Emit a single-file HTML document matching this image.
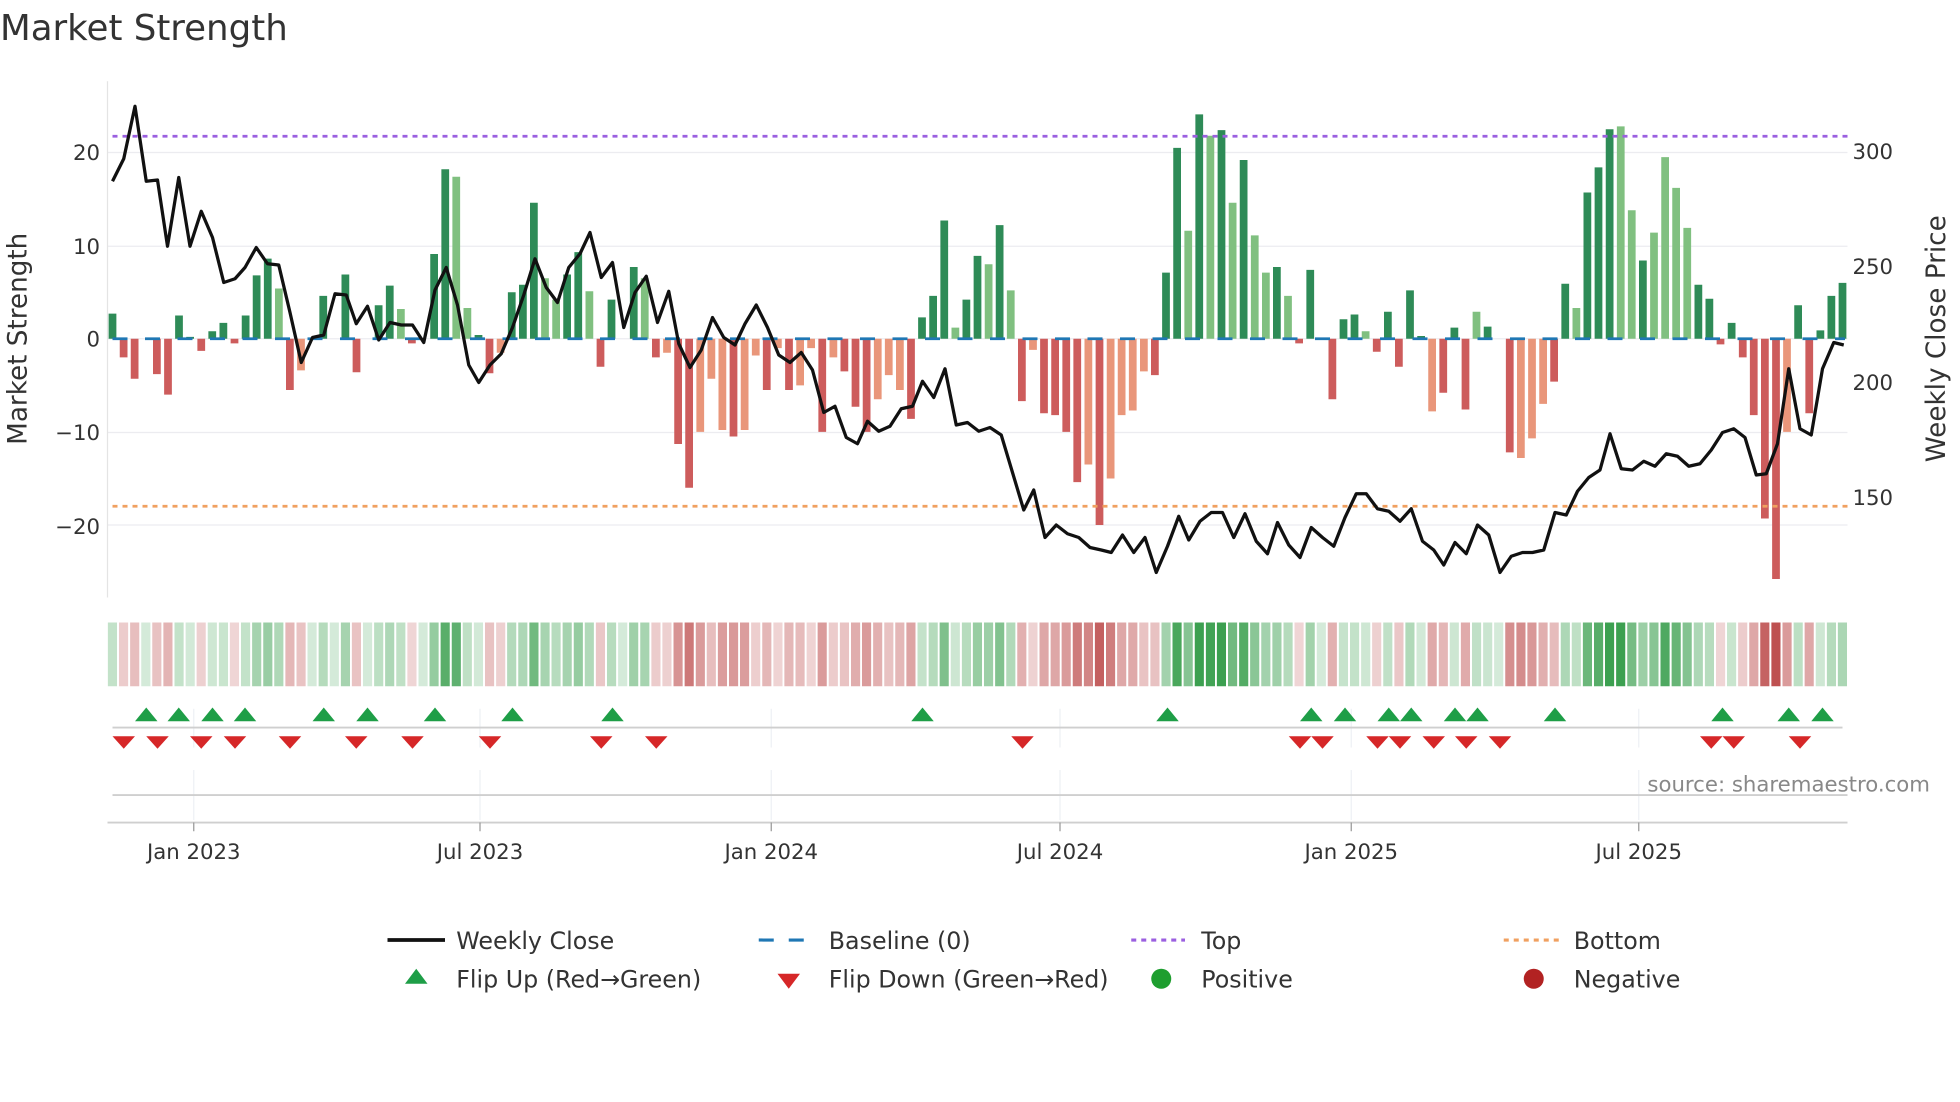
<!DOCTYPE html>
<html><head><meta charset="utf-8"><style>
html,body{margin:0;padding:0;background:#fff;width:1960px;height:1102px;overflow:hidden}
svg{display:block;font-family:"DejaVu Sans","Liberation Sans",sans-serif}
</style></head><body>
<svg id="s" width="1960" height="1102" viewBox="0 0 1568 881.6" preserveAspectRatio="none" xmlns="http://www.w3.org/2000/svg">
<rect width="1568" height="882" fill="#fff"/>
<text x="0" y="32" font-size="28.5" fill="#333">Market Strength</text>
<g id="grid" stroke="#ececf0" stroke-width="1">
<line x1="86" y1="122" x2="1478" y2="122"/><line x1="86" y1="197" x2="1478" y2="197"/>
<line x1="86" y1="271" x2="1478" y2="271"/><line x1="86" y1="346" x2="1478" y2="346"/>
<line x1="86" y1="420" x2="1478" y2="420"/>
</g>
<line x1="86" y1="65" x2="86" y2="478" stroke="#e4e4e4"/>
<g font-size="17" fill="#333" text-anchor="end">
<text x="80" y="128">20</text><text x="80" y="203">10</text><text x="80" y="277">0</text>
<text x="80" y="352">−10</text><text x="80" y="427">−20</text>
</g>
<g font-size="17" fill="#333">
<text x="1482" y="127">300</text><text x="1482" y="219">250</text><text x="1482" y="312">200</text><text x="1482" y="404">150</text>
</g>
<text transform="translate(21,271) rotate(-90)" font-size="21" fill="#333" text-anchor="middle">Market Strength</text>
<text transform="translate(1556,271) rotate(-90)" font-size="21" fill="#333" text-anchor="middle">Weekly Close Price</text>
<g id="bars"></g>
<line x1="90" y1="271" x2="1476" y2="271" stroke="#1f77b4" stroke-width="2.2" stroke-dasharray="12,14"/>
<line x1="90" y1="109" x2="1478" y2="109" stroke="#9b5fe0" stroke-width="2.2" stroke-dasharray="4,4"/>
<line x1="90" y1="405" x2="1478" y2="405" stroke="#f0a060" stroke-width="2.2" stroke-dasharray="4,4"/>
<polyline id="price" fill="none" stroke="#111" stroke-width="2.6" stroke-linejoin="round"/>
<g id="heat"></g>
<g stroke="#eef0f4">
<line x1="155" y1="567" x2="155" y2="598"/><line x1="384" y1="567" x2="384" y2="598"/><line x1="617" y1="567" x2="617" y2="598"/>
<line x1="848" y1="567" x2="848" y2="598"/><line x1="1081" y1="567" x2="1081" y2="598"/><line x1="1311" y1="567" x2="1311" y2="598"/>
<line x1="155" y1="616" x2="155" y2="656"/><line x1="384" y1="616" x2="384" y2="656"/><line x1="617" y1="616" x2="617" y2="656"/>
<line x1="848" y1="616" x2="848" y2="656"/><line x1="1081" y1="616" x2="1081" y2="656"/><line x1="1311" y1="616" x2="1311" y2="656"/>
</g>
<line x1="90" y1="582" x2="1474" y2="582" stroke="#cfcfcf" stroke-width="1.5"/>
<g id="marks"></g>
<line x1="90" y1="636" x2="1478" y2="636" stroke="#cfcfcf" stroke-width="1.5"/>
<text x="1544" y="633" font-size="17" fill="#888" text-anchor="end">source: sharemaestro.com</text>
<line x1="86" y1="658" x2="1478" y2="658" stroke="#cfcfcf" stroke-width="1.5"/>
<g stroke="#999"><line x1="155" y1="658" x2="155" y2="665"/><line x1="384" y1="658" x2="384" y2="665"/><line x1="617" y1="658" x2="617" y2="665"/><line x1="848" y1="658" x2="848" y2="665"/><line x1="1081" y1="658" x2="1081" y2="665"/><line x1="1311" y1="658" x2="1311" y2="665"/></g>
<g font-size="17" fill="#333" text-anchor="middle">
<text x="155" y="687">Jan 2023</text><text x="384" y="687">Jul 2023</text><text x="617" y="687">Jan 2024</text>
<text x="848" y="687">Jul 2024</text><text x="1081" y="687">Jan 2025</text><text x="1311" y="687">Jul 2025</text>
</g>
<g font-size="19" fill="#333">
<line x1="310" y1="752" x2="356" y2="752" stroke="#111" stroke-width="3"/><text x="365" y="759">Weekly Close</text>
<line x1="607" y1="752" x2="650" y2="752" stroke="#1f77b4" stroke-width="2.5" stroke-dasharray="12,12"/><text x="663" y="759">Baseline (0)</text>
<line x1="905" y1="752" x2="948" y2="752" stroke="#9b5fe0" stroke-width="2.5" stroke-dasharray="4,4"/><text x="961" y="759">Top</text>
<line x1="1203" y1="752" x2="1247" y2="752" stroke="#f0a060" stroke-width="2.5" stroke-dasharray="4,4"/><text x="1259" y="759">Bottom</text>
<polygon points="333,775 342,787 324,787" fill="#1e9e47"/><text x="365" y="790">Flip Up (Red→Green)</text>
<polygon points="622,779 640,779 631,791" fill="#d62728"/><text x="663" y="790">Flip Down (Green→Red)</text>
<circle cx="929" cy="783" r="8" fill="#1e9e2f"/><text x="961" y="790">Positive</text>
<circle cx="1227" cy="783" r="8" fill="#b22222"/><text x="1259" y="790">Negative</text>
</g>
</svg>
<script>
var v=[2.7,-2,-4.3,0,-3.8,-6,2.5,0.2,-1.3,0.8,1.7,-0.5,2.5,6.8,8.6,5.4,-5.5,-3.4,0,4.6,0,6.9,-3.6,0,3.6,5.7,3.2,-0.5,0,9.1,18.2,17.4,3.3,0.4,-3.7,-1.5,5,5.8,14.6,6.5,4.2,6.9,9.3,5.1,-3,4.2,0,7.7,6.5,-2,-1.5,-11.3,-16,-10,-4.3,-9.8,-10.5,-9.8,-1.8,-5.5,-1,-5.5,-5,-1,-10,-2,-3.5,-7.3,-10,-6.5,-3.9,-5.5,-8.6,2.3,4.6,12.7,1.2,4.2,8.9,8,12.2,5.2,-6.7,-1.2,-8,-8.2,-10,-15.4,-13.5,-20,-15,-8.2,-7.7,-3.5,-3.9,7.1,20.5,11.6,24.1,21.8,22.4,14.6,19.2,11.1,7.1,7.7,4.6,-0.5,7.4,0,-6.5,2.1,2.6,0.8,-1.4,2.9,-3,5.2,0.3,-7.8,-5.8,1.2,-7.6,2.9,1.3,0,-12.2,-12.8,-10.7,-7,-4.6,5.9,3.3,15.7,18.4,22.5,22.8,13.8,8.4,11.4,19.5,16.2,11.9,5.8,4.3,-0.6,1.7,-2,-8.2,-19.3,-25.8,-10,3.6,-8,0.9,4.6,6];
var light={15:1,17:1,26:1,31:1,32:1,35:1,39:1,40:1,43:1,48:1,50:1,53:1,54:1,55:1,57:1,58:1,60:1,62:1,63:1,65:1,69:1,70:1,71:1,76:1,79:1,81:1,83:1,88:1,90:1,91:1,92:1,93:1,97:1,99:1,101:1,103:1,104:1,106:1,113:1,119:1,123:1,127:1,128:1,129:1,132:1,136:1,137:1,139:1,140:1,141:1,142:1,151:1};
var N=v.length,st=(1474-90)/(N-1),b='',h='';
for(var i=0;i<N;i++){var x=90+i*st,y=v[i],hh=Math.abs(y)*7.45,l=light[i];
var c=y>=0?(l?'#80c080':'#2e8b57'):(l?'#e9967a':'#cd5c5c');
if(hh>0.3)b+='<rect x="'+(x-3.1).toFixed(1)+'" y="'+(y>=0?271-hh:271).toFixed(1)+'" width="6.2" height="'+hh.toFixed(1)+'" fill="'+c+'"/>';
var a=Math.min(1,0.22+Math.abs(y)/26*0.9);
var col=y>=0?'rgba(60,160,80,'+a.toFixed(2)+')':'rgba(190,80,80,'+a.toFixed(2)+')';
h+='<rect x="'+(x-4.45+0.8).toFixed(1)+'" y="498" width="'+(st-1.6).toFixed(1)+'" height="51" fill="'+col+'"/>';}
document.getElementById('bars').innerHTML=b;document.getElementById('heat').innerHTML=h;
var p=[[90,145],[99,127],[108,85],[117,145],[126,144],[134,197],[143,142],[152,197],[161,169],[170,190],[179,226],[188,223],[196,214],[205,198],[214,211],[223,212],[232,250],[241,290],[250,270],[259,268],[268,235],[277,236],[285,259],[294,245],[303,272],[312,258],[321,260],[330,260],[339,274],[348,232],[357,214],[366,244],[375,292],[383,306],[392,292],[401,283],[410,262],[419,236],[428,207],[437,230],[446,242],[455,214],[464,203],[472,186],[481,222],[490,210],[499,262],[508,234],[517,221],[526,258],[535,233],[543,275],[552,294],[561,280],[570,254],[579,270],[588,276],[596,259],[605,244],[614,262],[623,284],[632,290],[641,282],[650,296],[659,330],[668,325],[677,350],[686,355],[694,337],[703,345],[712,341],[721,327],[730,325],[738,305],[747,318],[756,295],[765,340],[774,338],[783,345],[792,342],[801,348],[810,378],[819,408],[827,392],[836,430],[845,420],[854,427],[863,430],[872,438],[881,440],[889,442],[898,428],[907,442],[916,430],[925,458],[934,437],[943,413],[951,432],[960,417],[969,410],[978,410],[987,430],[996,411],[1005,433],[1014,443],[1022,418],[1031,436],[1040,446],[1049,422],[1058,430],[1067,437],[1076,414],[1085,395],[1093,395],[1102,407],[1111,409],[1120,417],[1129,407],[1138,433],[1147,440],[1155,452],[1164,434],[1173,443],[1182,420],[1191,428],[1200,458],[1209,445],[1218,442],[1226,442],[1235,440],[1244,410],[1253,412],[1262,393],[1271,382],[1280,376],[1288,347],[1297,375],[1306,376],[1315,369],[1324,373],[1333,363],[1342,365],[1351,373],[1360,371],[1369,360],[1378,346],[1387,343],[1396,350],[1405,380],[1413,379],[1422,355],[1431,295],[1440,343],[1449,348],[1458,295],[1467,274],[1475,276]];
document.getElementById('price').setAttribute('points',p.map(function(q){return q.join(',')}).join(' '));
var up=[117,143,170,196,259,294,348,410,490,738,934,1049,1076,1111,1129,1164,1182,1244,1378,1431,1458];
var dn=[99,126,161,188,232,285,330,392,481,525,818,1040,1058,1102,1120,1147,1173,1200,1369,1387,1440];
var m='';up.forEach(function(x){m+='<polygon points="'+x+',566 '+(x+9)+',577 '+(x-9)+',577" fill="#1e9e47"/>'});
dn.forEach(function(x){m+='<polygon points="'+(x-9)+',589 '+(x+9)+',589 '+x+',599" fill="#d62728"/>'});
document.getElementById('marks').innerHTML=m;
</script>
</body></html>
